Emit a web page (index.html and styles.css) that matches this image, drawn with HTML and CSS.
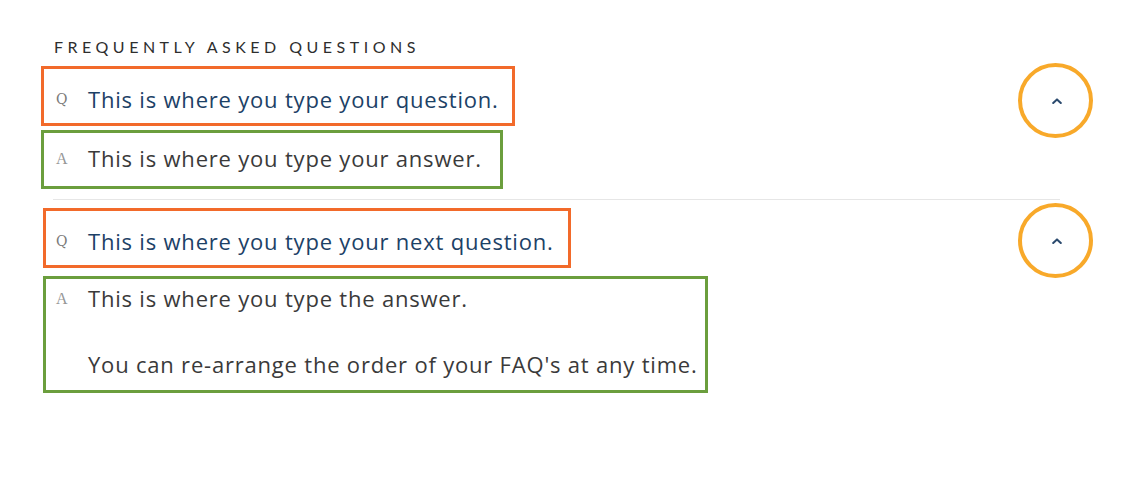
FILE: index.html
```html
<!DOCTYPE html>
<html lang="en">
<head>
<meta charset="utf-8">
<title>FAQ</title>
<link rel="stylesheet" href="styles.css">
</head>
<body>
<section class="faq">
  <h2 class="faq-title">Frequently Asked Questions</h2>

  <div class="faq-item faq-item--first">
    <div class="q-box">
      <span class="label">Q</span>
      <span class="q-text">This is where you type your question.</span>
    </div>
    <div class="a-box">
      <span class="label label--a">A</span>
      <div class="a-text">
        <p>This is where you type your answer.</p>
      </div>
    </div>
    <button class="toggle toggle--first" aria-label="Collapse">
      <svg width="10" height="6" viewBox="0 0 10 6"><path d="M1.2 5 L5 1.4 L8.8 5" fill="none" stroke="#2b4a6e" stroke-width="2" stroke-linecap="round" stroke-linejoin="round"/></svg>
    </button>
  </div>

  <div class="faq-item faq-item--second">
    <div class="q-box q-box--shift">
      <span class="label">Q</span>
      <span class="q-text">This is where you type your next question.</span>
    </div>
    <div class="a-box a-box--shift">
      <span class="label label--a">A</span>
      <div class="a-text">
        <p>This is where you type the answer.</p>
        <p>You can re-arrange the order of your FAQ's at any time.</p>
      </div>
    </div>
    <button class="toggle toggle--second" aria-label="Collapse">
      <svg width="10" height="6" viewBox="0 0 10 6"><path d="M1.2 5 L5 1.4 L8.8 5" fill="none" stroke="#2b4a6e" stroke-width="2" stroke-linecap="round" stroke-linejoin="round"/></svg>
    </button>
  </div>
</section>
</body>
</html>
```

FILE: styles.css
```css
* { box-sizing: border-box; }

body {
  margin: 0;
  background: #ffffff;
  font-family: "Open Sans", "Liberation Sans", sans-serif;
}

.faq {
  width: 1060px;
  padding: 37px 0 0 53px;
}

.faq-title {
  margin: 0 0 9px 1px;
  font-size: 16px;
  line-height: 20px;
  font-weight: 400;
  letter-spacing: 4.5px;
  text-transform: uppercase;
  color: #2e2e2e;
  font-family: "Lato", "Open Sans", sans-serif;
}

.faq-item {
  position: relative;
}

.faq-item--first {
  border-bottom: 1px solid #e6e6e6;
  padding-bottom: 10px;
}

.faq-item--second {
  padding-top: 8px;
}

.q-box,
.a-box {
  display: flex;
  width: fit-content;
  margin-left: -12px;
  padding: 0 13px 0 11px;
}

.q-box {
  align-items: center;
  height: 60px;
  border: 3px solid #f26a2a;
  padding-top: 5px;
}

.a-box {
  align-items: flex-start;
  margin-top: 4px;
  min-height: 59px;
  border: 3px solid #6b9e3d;
  padding-top: 9px;
  padding-right: 18px;
}

.q-box--shift,
.a-box--shift {
  margin-left: -10px;
  padding-left: 9px;
}

.q-box--shift { padding-right: 14px; }

.a-box--shift {
  margin-top: 8px;
  padding-top: 3px;
  padding-right: 7px;
  height: 117px;
}

.label {
  width: 33px;
  flex: none;
  padding-left: 1px;
  font-family: "DejaVu Serif", "Liberation Serif", serif;
  font-size: 14px;
  color: #7a7a7a;
}

.label--a {
  line-height: 33px;
  font-family: "Liberation Serif", serif;
  font-size: 16px;
  color: #969696;
}

.q-text {
  font-size: 22px;
  letter-spacing: 0.8px;
  color: #1c4166;
}

.a-text p {
  margin: 0;
  font-size: 22px;
  letter-spacing: 0.8px;
  line-height: 33px;
  color: #3a3a3a;
}

.a-text p + p {
  margin-top: 33px;
}

.toggle {
  position: absolute;
  left: 965px;
  width: 75px;
  height: 75px;
  border: 4px solid #f8a92a;
  border-radius: 50%;
  background: transparent;
  padding: 0;
  display: flex;
  align-items: center;
  justify-content: center;
  cursor: pointer;
}

.toggle svg { display: block; margin-left: 3px; }

.toggle--first { top: -3px; }
.toggle--second { top: 3px; }
```
